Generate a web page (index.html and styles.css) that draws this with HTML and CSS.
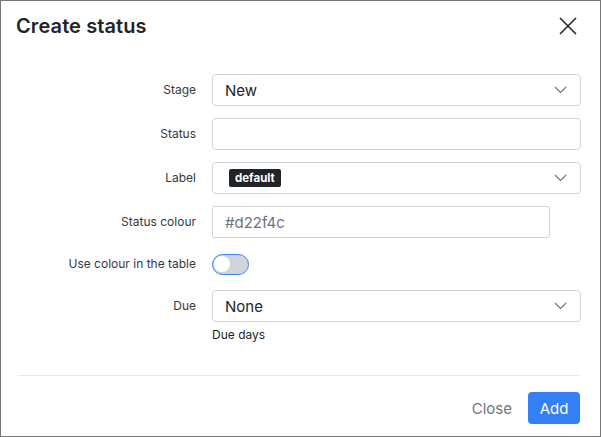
FILE: index.html
```html
<!DOCTYPE html>
<html>
<head>
<meta charset="utf-8">
<link rel="stylesheet" href="styles.css">
</head>
<body>
<div class="modal">
  <div class="modal-header">
    <h1 class="modal-title">Create status</h1>
    <button class="btn-close" aria-label="Close">
      <svg width="18" height="18" viewBox="0 0 18 18"><path d="M1 1 L17 17 M17 1 L1 17" stroke="#212529" stroke-width="1.6" fill="none"/></svg>
    </button>
  </div>
  <div class="modal-body">
    <label class="form-label">Stage</label>
    <div class="form-control select"><span class="value">New</span><svg class="chev" width="13" height="8" viewBox="0 0 13 8"><path d="M1 1 L6.5 6.5 L12 1" stroke="#6c757d" stroke-width="1.2" fill="none"/></svg></div>

    <label class="form-label">Status</label>
    <div class="form-control"></div>

    <label class="form-label">Label</label>
    <div class="form-control select"><span class="badge">default</span><svg class="chev" width="13" height="8" viewBox="0 0 13 8"><path d="M1 1 L6.5 6.5 L12 1" stroke="#6c757d" stroke-width="1.2" fill="none"/></svg></div>

    <label class="form-label">Status colour</label>
    <div class="form-control short"><span class="placeholder">#d22f4c</span></div>

    <label class="form-label">Use colour in the table</label>
    <div class="toggle-cell"><span class="toggle"><span class="knob"></span></span></div>

    <label class="form-label">Due</label>
    <div class="due-cell">
      <div class="form-control select"><span class="value">None</span><svg class="chev" width="13" height="8" viewBox="0 0 13 8"><path d="M1 1 L6.5 6.5 L12 1" stroke="#6c757d" stroke-width="1.2" fill="none"/></svg></div>
      <div class="help">Due days</div>
    </div>
  </div>
  <div class="modal-footer">
    <button class="btn btn-link">Close</button>
    <button class="btn btn-primary">Add</button>
  </div>
</div>
</body>
</html>
```

FILE: styles.css
```css
html, body {
  margin: 0;
  padding: 0;
  background: #fff;
}
body {
  font-family: Inter, "Noto Sans", sans-serif;
  color: #212529;
}
.modal {
  width: 601px;
  height: 437px;
  box-sizing: border-box;
  border: 1px solid #777;
  display: flex;
  flex-direction: column;
}
.modal-header {
  height: 50px;
  display: flex;
  align-items: center;
  justify-content: space-between;
  padding: 0 23px 0 15px;
}
.modal-title {
  margin: 0;
  font-size: 20px;
  font-weight: 600;
  color: #212529;
  letter-spacing: 0.1px;
}
.btn-close {
  border: 0;
  background: none;
  padding: 0;
  width: 18px;
  height: 18px;
  display: flex;
}
.modal-body {
  padding: 23px 19px 0 19px;
  display: grid;
  grid-template-columns: 176px 369px;
  column-gap: 16px;
  row-gap: 12px;
  align-items: center;
}
.form-label {
  text-align: right;
  font-size: 12px;
  color: #343a40;
  line-height: 16px;
}
.form-control {
  height: 32px;
  box-sizing: border-box;
  border: 1px solid #ced4da;
  border-radius: 4px;
  display: flex;
  align-items: center;
  padding: 0 12px;
  font-size: 15px;
  color: #212529;
}
.form-control.short {
  width: 338px;
  border-radius: 2px;
}
.select {
  justify-content: space-between;
  padding-right: 13px;
}
.chev {
  display: block;
}
.placeholder {
  color: #6c757d;
}
.badge {
  background: #212529;
  color: #fff;
  font-size: 11.5px;
  font-weight: 700;
  line-height: 18px;
  padding: 0 6px;
  border-radius: 2px;
  margin-left: 4px;
}
.toggle-cell {
  height: 28px;
  display: flex;
  align-items: center;
}
.toggle {
  width: 37px;
  height: 21px;
  box-sizing: border-box;
  border: 1.5px solid #3b82f6;
  border-radius: 11px;
  background: #d1d5db;
  position: relative;
  display: block;
}
.knob {
  position: absolute;
  left: 1px;
  top: 1px;
  width: 16px;
  height: 16px;
  border-radius: 50%;
  background: #fff;
}
.due-cell .help {
  margin-top: 5px;
  font-size: 12px;
  line-height: 16px;
  color: #212529;
}
.due-cell {
  align-self: start;
}
.modal-body > .form-label:nth-last-of-type(1) {
  align-self: start;
  margin-top: 8px;
}
.modal-footer {
  margin: auto 20px 0 18px;
  border-top: 1px solid #e5e7eb;
  padding: 16px 0 12px;
  display: flex;
  justify-content: flex-end;
  gap: 16px;
}
.btn {
  font-family: Inter, "Noto Sans", sans-serif;
  font-size: 15px;
  height: 32px;
  border-radius: 4px;
  border: 0;
  padding: 0 13px;
}
.btn-link {
  background: none;
  color: #6c757d;
  padding: 0;
  margin-right: 0;
}
.btn-primary {
  background: #3380f3;
  color: #fff;
  width: 52px;
  padding: 0;
}
```
